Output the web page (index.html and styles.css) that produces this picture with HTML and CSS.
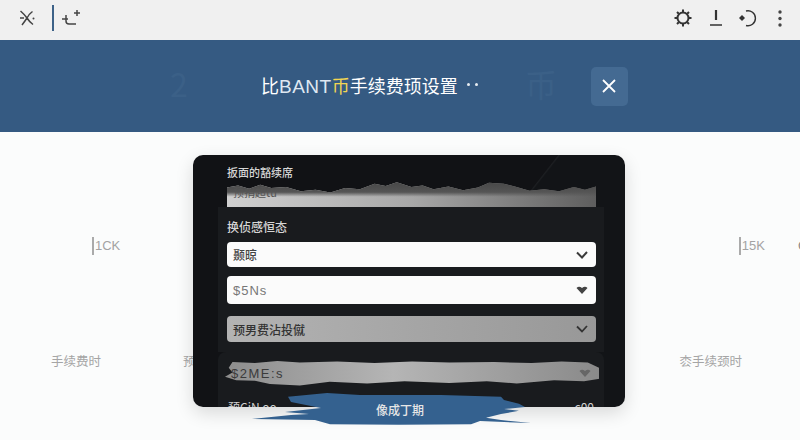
FILE: index.html
```html
<!DOCTYPE html>
<html lang="zh-CN">
<head>
  <meta charset="UTF-8">
  <title>比BANT币手续费设置</title>
  <link rel="stylesheet" href="styles.css">
</head>
<body>
  <header class="topbar">
    <div class="topbar-left">
      <svg class="icon" width="20" height="20" viewBox="0 0 20 20"><path d="M3.500 3 Q8 7 10 10 Q12.500 14 16 16.500 M15.500 3.500 Q12 6 10 10 Q8 13 5 17 M3 10 H7" fill="none" stroke="#444" stroke-width="1.500"/><circle cx="16.500" cy="10.500" r="1" fill="#444"/></svg>
      <span class="divider"></span>
      <svg class="icon" width="20" height="20" viewBox="0 0 20 20"><path d="M1 11 H7 M5 7 V13 Q5 16 8 16 H15 M13 5 H19 M16 2 V8" fill="none" stroke="#444" stroke-width="1.500"/></svg>
    </div>
    <div class="topbar-right">
      <svg class="icon" width="18" height="18" viewBox="0 0 18 18"><circle cx="9" cy="9" r="5.500" fill="none" stroke="#333" stroke-width="2"/><path d="M9 0.500 V3 M9 15 V17.500 M0.500 9 H3 M15 9 H17.500 M3 3 L4.800 4.800 M13.200 13.200 L15 15 M15 3 L13.200 4.800 M4.800 13.200 L3 15" stroke="#333" stroke-width="2"/></svg>
      <svg class="icon icon-alert" width="14" height="18" viewBox="0 0 14 18"><path d="M7 1 V11" stroke="#333" stroke-width="2.200"/><path d="M1 16 H13" stroke="#333" stroke-width="1.500"/></svg>
      <svg class="icon" width="20" height="18" viewBox="0 0 20 18"><path d="M8 2 A7.500 7.500 0 1 1 8 16.500" fill="none" stroke="#333" stroke-width="1.400"/><path d="M1 9 L4 6 L7 9 L4 12 Z" fill="#333"/></svg>
      <svg class="icon icon-more" width="6" height="18" viewBox="0 0 6 18"><circle cx="3" cy="3" r="1.700" fill="#444"/><circle cx="3" cy="9.500" r="1.700" fill="#444"/><circle cx="3" cy="16" r="1.700" fill="#444"/></svg>
    </div>
  </header>

  <section class="banner">
    <span class="ghost ghost-one">2</span>
    <span class="ghost ghost-two">币</span>
    <h1 class="banner-title">比<span class="brand">BANT</span><span class="coin">币</span>手续费顼设置</h1>
    <span class="banner-dots"><i></i><i></i></span>
    <button class="close-btn">
      <svg width="14" height="14" viewBox="0 0 14 14"><path d="M1 1 L13 13 M13 1 L1 13" stroke="#fff" stroke-width="1.800"/></svg>
    </button>
  </section>

  <main class="content">
    <div class="stat-row">
      <span class="stat">1CK</span>
      <span class="stat-spacer"></span>
      <span class="stat">15K</span>
      <span class="stat-cut">C</span>
    </div>
    <div class="label-row">
      <span>手续费时</span>
      <span>预</span>
      <span class="label-spacer"></span>
      <span>枩手续颈时</span>
    </div>

    <div class="modal">
      <div class="modal-top">
        <p class="field-label small">扳面的豁续席</p>
        <div class="torn-input">预捐超tu</div>
      </div>
      <div class="panel">
        <p class="field-label">换侦感恒态</p>
        <div class="select select-white">颞晾
          <svg class="chevron" width="12" height="8" viewBox="0 0 12 8"><path d="M1 1.500 L6 6.500 L11 1" fill="none" stroke="#3a3a3a" stroke-width="2"/></svg>
        </div>
        <div class="select select-white select-tall">$5Ns
          <svg class="chevron" width="12" height="8" viewBox="0 0 12 8"><path d="M0.500 2 Q3 -0.500 6 2 Q9 -0.500 11.500 2 L6 8 Z" fill="#444"/></svg>
        </div>
        <div class="select select-grey">预男费沾投僦
          <svg class="chevron" width="12" height="8" viewBox="0 0 12 8"><path d="M1 1.500 L6 6.500 L11 1" fill="none" stroke="#333" stroke-width="1.800"/></svg>
        </div>
      </div>
      <div class="panel panel-lower">
        <div class="select select-torn">$2ME:s
          <svg class="chevron" width="12" height="8" viewBox="0 0 12 8"><path d="M0.500 2 Q3 -0.500 6 2 Q9 -0.500 11.500 2 L6 8 Z" fill="#666"/></svg>
        </div>
        <div class="last-row"><span>预CiN oo</span><span>c00</span></div>
      </div>
    </div>
    <button class="confirm-btn">像成丁期</button>
  </main>
</body>
</html>
```

FILE: styles.css
```css
* {
  box-sizing: border-box;
}

html, body {
  height: 100%;
}

body {
  margin: 0;
  width: 800px;
  height: 440px;
  overflow: hidden;
  background: #fbfcfc;
  font-family: "Noto Sans CJK SC", "Noto Sans", sans-serif;
}

.topbar {
  height: 40px;
  background: #f0f0f0;
  display: flex;
  align-items: center;
  justify-content: space-between;
  padding: 0 17px 4px 17px;
}

.topbar-left,
.topbar-right {
  display: flex;
  align-items: center;
}

.topbar-left .divider {
  width: 2px;
  height: 26px;
  background: #3d6288;
  margin: 0 7px 0 15px;
}

.topbar-right {
  gap: 17px;
}

.icon {
  display: block;
}

.icon-alert {
  margin-right: -2px;
}

.icon-more {
  margin-left: 2px;
}

.banner {
  position: relative;
  height: 92px;
  background: #355a82;
  display: flex;
  align-items: center;
  padding-left: 261px;
  color: #fff;
}

.banner-title {
  margin: 0 0 2px 0;
  font-size: 18px;
  font-weight: 400;
  white-space: nowrap;
}

.brand {
  font-family: "Liberation Sans", sans-serif;
  font-size: 19px;
  letter-spacing: 0.5px;
  color: #dfe8f2;
}

.coin {
  color: #f2d552;
}

.banner-dots {
  display: flex;
  gap: 5px;
  margin: 0 0 3px 9px;
}

.banner-dots i {
  width: 3px;
  height: 3px;
  border-radius: 50%;
  background: #e8edf2;
}

.close-btn {
  margin-left: 113px;
  width: 37px;
  height: 39px;
  border: none;
  border-radius: 5px;
  background: #446a92;
  display: flex;
  align-items: center;
  justify-content: center;
  padding: 0;
}

.ghost {
  position: absolute;
  top: 20px;
  font-size: 32px;
  color: #3b6087;
}

.ghost-one {
  left: 170px;
}

.ghost-two {
  left: 525px;
}

.content {
  position: relative;
  height: 308px;
  background: #fbfcfc;
}

.stat-row {
  display: flex;
  padding: 105px 0 0 92px;
}

.stat {
  border-left: 2px solid #aaa;
  padding-left: 1px;
  font-size: 13px;
  line-height: 18px;
  color: #a3a3a3;
  font-family: "Liberation Sans", sans-serif;
}

.stat-spacer {
  flex: 1;
}

.stat-cut {
  margin-left: 33px;
  width: 2px;
  overflow: hidden;
  font-size: 13px;
  line-height: 18px;
  color: #888;
  font-family: "Liberation Sans", sans-serif;
}

.label-row {
  display: flex;
  padding: 97px 58px 0 51px;
  font-size: 12.500px;
  line-height: 18px;
  color: #a5a5a5;
}

.label-row span:nth-child(2) {
  margin-left: 82px;
}

.label-spacer {
  flex: 1;
}

.modal {
  position: absolute;
  left: 193px;
  top: 23px;
  width: 432px;
  height: 252px;
  border-radius: 10px;
  background: linear-gradient(128deg, #111215 58%, #1d1f22 58.200%, #121417 58.500%);
  box-shadow: 0 6px 18px rgba(0, 0, 0, 0.14);
  overflow: hidden;
}

.modal-top {
  padding: 9px 29px 0 34px;
}

.field-label {
  margin: 0;
  font-size: 12px;
  font-weight: 500;
  line-height: 18px;
  color: #d6d6d6;
}

.field-label.small {
  font-size: 11px;
  line-height: 16px;
}

.torn-input {
  height: 27px;
  margin-top: 0;
  padding: 4px 0 0 6px;
  font-size: 11px;
  line-height: 16px;
  color: #555;
  background:
    linear-gradient(180deg, #444 0, #555 45%, transparent 62%),
    linear-gradient(90deg, #d0d0d0, #a8a8a8 50%, #5e5e5e);
  clip-path: polygon(0 28%, 3% 20%, 6% 32%, 9% 18%, 12% 30%, 16% 26%, 20% 42%, 24% 36%, 28% 46%, 32% 30%, 36% 34%, 40% 14%, 43% 22%, 46% 8%, 50% 26%, 53% 20%, 56% 34%, 60% 24%, 64% 38%, 68% 28%, 71% 10%, 75% 14%, 78% 24%, 82% 40%, 86% 34%, 90% 42%, 94% 26%, 97% 36%, 100% 24%, 100% 100%, 0 100%);
}

.panel {
  margin: 0 21px 0 25px;
  padding: 11px 8px 0 9px;
  height: 145px;
  background: #191b1e;
}

.panel .field-label {
  margin-bottom: 6px;
}

.select {
  display: flex;
  align-items: center;
  justify-content: space-between;
  height: 25px;
  padding: 0 8px 0 6px;
  border-radius: 4px;
  font-size: 12px;
  font-weight: 500;
  color: #444;
}

.select-white {
  background: #fbfbfb;
}

.select-tall {
  height: 28px;
  margin-top: 9px;
  font-family: "Liberation Sans", sans-serif;
  font-size: 13px;
  font-weight: 400;
  letter-spacing: 1px;
  color: #777;
}

.select-grey {
  height: 26px;
  margin-top: 12px;
  background: linear-gradient(90deg, #b3b3b3, #989898);
  color: #333;
}

.chevron {
  display: block;
}

.panel-lower {
  height: 60px;
  margin-top: 0;
  padding-top: 8px;
  border-radius: 8px 8px 0 0;
}

.select-torn {
  height: 26px;
  margin: 0 -3px 0 -2px;
  font-family: "Liberation Sans", sans-serif;
  font-size: 13px;
  font-weight: 400;
  letter-spacing: 1.500px;
  color: #3b3b3b;
  background: linear-gradient(90deg, #8d8d8d, #b5b5b5 45%, #8a8a8a);
  clip-path: polygon(1% 30%, 2% 8%, 8% 12%, 14% 4%, 20% 10%, 30% 6%, 40% 12%, 50% 6%, 60% 10%, 72% 8%, 82% 12%, 90% 6%, 97% 10%, 100% 30%, 101% 70%, 96% 82%, 88% 78%, 78% 90%, 70% 82%, 60% 88%, 48% 82%, 38% 90%, 28% 84%, 20% 98%, 12% 92%, 8% 80%, 3% 78%, 0 64%, 2% 48%);
}

.last-row {
  display: flex;
  justify-content: space-between;
  margin-top: 13px;
  padding: 0 2px 0 1px;
  font-size: 12px;
  line-height: 16px;
  color: #d0d0d0;
}

.confirm-btn {
  position: absolute;
  left: 252px;
  top: 261px;
  width: 300px;
  height: 35px;
  border: none;
  padding: 0 4px 3px 0;
  background: #34618f;
  color: #e6e6e6;
  font-size: 12px;
  font-weight: 500;
  font-family: inherit;
  clip-path: polygon(25% 0, 36% 6%, 63% 6%, 83% 11%, 84% 20%, 89% 31%, 91% 40%, 84% 46%, 89% 51%, 83% 60%, 78% 71%, 83% 77%, 93% 86%, 76% 80%, 73% 89%, 49% 91%, 26% 89%, 21% 77%, 0 74%, 13% 63%, 19% 60%, 11% 54%, 23% 43%, 13% 26%, 12% 11%);
}
```
